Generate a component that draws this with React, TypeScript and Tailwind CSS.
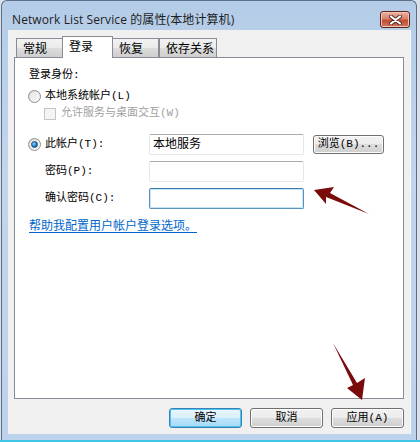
import type { ReactNode } from "react";

// Windows 7 style dialog: "Network List Service 的属性" / 登录 tab

const mono = "font-['Liberation_Mono','Noto_Sans_CJK_SC',monospace]";

function Radio({ checked }: { checked?: boolean }) {
  return (
    <div className="w-[13px] h-[13px] rounded-full border border-[#8e8f8f] bg-[linear-gradient(135deg,#d6d6d6_0%,#fdfdfd_100%)] flex items-center justify-center shrink-0">
      <div className="w-[9px] h-[9px] rounded-full bg-[linear-gradient(135deg,#e6e6e6_0%,#f7f7f7_100%)] flex items-center justify-center">
        {checked && (
          <div className="w-[7px] h-[7px] rounded-full border border-[#1a4f7c] bg-[radial-gradient(circle_at_35%_35%,#a6dcff_0%,#2a8ad4_45%,#0c4c8a_100%)]" />
        )}
      </div>
    </div>
  );
}

function TextBox({ children, focused }: { children?: ReactNode; focused?: boolean }) {
  return (
    <div
      className={
        focused
          ? "w-[155px] h-[21px] rounded-[2px] border border-[#5c93bc] border-t-[#3d7bad] bg-white shadow-[inset_0_0_0_1px_#c4e5f6] px-[3px] flex items-center text-[12px]"
          : "w-[155px] h-[21px] rounded-[2px] border border-[#e3e9ef] border-t-[#abadb3] bg-white px-[3px] flex items-center text-[12px]"
      }
    >
      {children}
    </div>
  );
}

function Button({ children, primary, className }: { children: ReactNode; primary?: boolean; className?: string }) {
  return (
    <div
      className={
        (primary
          ? "border-[#3c7fb1] bg-[linear-gradient(#eaf6fd_0%,#d9f0fc_49%,#bee6fd_50%,#a7d9f5_100%)] shadow-[inset_0_0_0_1px_#48c4f5]"
          : "border-[#707070] bg-[linear-gradient(#f2f2f2_0%,#ebebeb_49%,#dddddd_50%,#cfcfcf_100%)] shadow-[inset_0_0_0_1px_#fcfcfc]") +
        " rounded-[3px] border flex items-center justify-center text-[11px] text-black " +
        (className ?? "")
      }
    >
      {children}
    </div>
  );
}

const tabs = [
  { label: "常规", w: "w-[47px]" },
  { label: "登录", w: "w-[51px]", selected: true },
  { label: "恢复", w: "w-[47px]" },
  { label: "依存关系", w: "w-[58px]" },
];

export default function App() {
  return (
    <div className={"relative w-[420px] h-[442px] overflow-hidden bg-[#d9e1ea] text-black " + mono}>
      <div className="ml-[1px] w-[416px] h-[440px] rounded-t-[6px] border border-b-0 border-[#5d6f86] bg-[linear-gradient(#b4cce7_0%,#c1d6ed_40%,#bdd3eb_100%)] flex flex-col">
        {/* title bar */}
        <div className="h-[29px] pt-[8px] pl-[10px] pr-[6px] flex items-center justify-between">
          <span className="text-[12px] text-[#1e1e1e] font-['Open_Sans','Noto_Sans_CJK_SC',sans-serif] tracking-[0.1px]">
            Network List Service 的属性(本地计算机)
          </span>
          <div className="w-[30px] h-[17px] rounded-[3px] border border-[#5b2419] bg-[linear-gradient(#eeb1a3_0%,#d8826d_45%,#c24d33_55%,#d3755c_100%)] shadow-[inset_0_0_0_1px_#f1c3b8] flex items-center justify-center">
            <svg width="13" height="10" viewBox="0 0 13 10">
              <path d="M2 1.5 L11 8.5 M11 1.5 L2 8.5" stroke="#4a2a24" strokeWidth="4" strokeLinecap="round" />
              <path d="M2 1.5 L11 8.5 M11 1.5 L2 8.5" stroke="#ffffff" strokeWidth="2.2" strokeLinecap="round" />
            </svg>
          </div>
        </div>

        {/* client area */}
        <div className="ml-[6px] mr-[5px] h-[404px] bg-[#f0f0f0] border-r border-[#f7f9fc] pt-[6px] px-[6px] flex flex-col">
          <div className="h-[21px] flex items-end pl-[2px]">
            {tabs.map((t) =>
              t.selected ? (
                <div
                  key={t.label}
                  className={t.w + " relative z-10 -mx-[1px] -mb-[1px] h-[22px] border border-b-0 border-[#898c95] bg-white pl-[6px] pb-[3px] flex items-center text-[12px] font-['Noto_Sans_CJK_SC',sans-serif]"}
                >
                  {t.label}
                </div>
              ) : (
                <div
                  key={t.label}
                  className={t.w + " h-[19px] border border-b-0 border-[#898c95] bg-[linear-gradient(#f2f2f2_0%,#ebebeb_49%,#dddddd_50%,#cfcfcf_100%)] pl-[6px] flex items-center text-[12px] font-['Noto_Sans_CJK_SC',sans-serif]"}
                >
                  {t.label}
                </div>
              )
            )}
          </div>

          <div className="h-[342px] border border-[#898c95] bg-white pl-[13px] pt-[11px] flex flex-col text-[11px]">
            <div className="leading-[13px] pl-[1px]">登录身份:</div>

            <div className="mt-[8px] h-[13px] flex items-center gap-[4px]">
              <Radio />
              <span className="leading-[13px]">本地系统帐户(L)</span>
            </div>

            <div className="mt-[4px] h-[13px] pl-[16px] flex items-center gap-[5px] text-[#a0a0a0]">
              <div className="w-[12px] h-[12px] border border-[#c6c6c6] bg-[#f4f4f4]" />
              <span className="leading-[13px]">允许服务与桌面交互(W)</span>
            </div>

            <div className="mt-[14px] flex items-center">
              <div className="w-[121px] flex items-center gap-[4px]">
                <Radio checked />
                <span>此帐户(T):</span>
              </div>
              <TextBox>本地服务</TextBox>
              <Button className="ml-[9px] w-[71px] h-[19px]">浏览(B)...</Button>
            </div>

            <div className="mt-[6px] flex items-center">
              <div className="w-[121px] pl-[17px]">密码(P):</div>
              <TextBox />
            </div>

            <div className="mt-[6px] flex items-center">
              <div className="w-[121px] pl-[17px]">确认密码(C):</div>
              <TextBox focused />
            </div>

            <div className="mt-[9px] pl-[1px] leading-[14px] text-[12px] text-[#0066cc] underline underline-offset-2 font-['Noto_Sans_CJK_SC',sans-serif]">
              帮助我配置用户帐户登录选项。
            </div>
          </div>

          <div className="mt-[9px] flex justify-end gap-[8px]">
            <Button primary className="w-[73px] h-[20px]">确定</Button>
            <Button className="w-[73px] h-[20px]">取消</Button>
            <Button className="w-[73px] h-[20px]">应用(A)</Button>
          </div>
        </div>
      </div>
      <div className="h-[2px] bg-[#3fc6e4]" />

      {/* annotation arrows drawn over the screenshot */}
      <svg className="absolute left-0 top-0 pointer-events-none" width="420" height="442" viewBox="0 0 420 442">
        <polygon points="314,190 334,187 330,193 369,214 326,197 326,204" fill="#7a0b0b" />
        <polygon points="333,343 357,383 365,378 362,400 347,388 353,385" fill="#7a0b0b" />
      </svg>
    </div>
  );
}
